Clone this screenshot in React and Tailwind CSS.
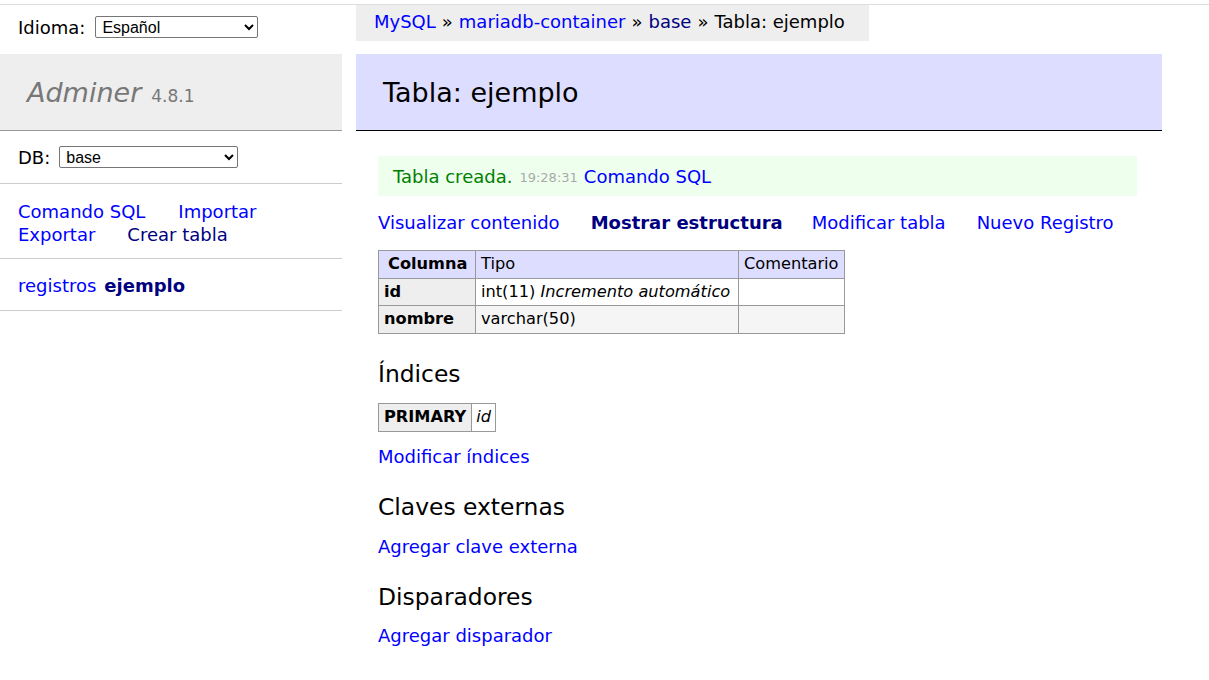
import React from 'react';

const font = { fontFamily: '"DejaVu Sans", Verdana, sans-serif' };
const selectFont = { fontFamily: '"Liberation Sans", Arial, sans-serif' };

function Sidebar() {
  return (
    <div className="w-[342px] shrink-0 text-[18px]">
      <div className="h-[49px] flex items-center pl-[18px] pb-[5px]">
        <span>Idioma:</span>
        <select className="ml-[10px] w-[163px] h-[22px] border border-[#767676] rounded-[2px] text-[16px] px-[2px] bg-white" style={selectFont} defaultValue="es">
          <option value="es">Español</option>
        </select>
      </div>
      <div className="h-[77px] bg-[#eeeeee] border-b border-[#999] flex items-center pl-[27px] pt-[3px]">
        <span className="italic text-[27px] text-[#777]">Adminer</span>
        <span className="ml-[10px] text-[17px] text-[#777] mt-[7px]">4.8.1</span>
      </div>
      <div className="h-[53px] flex items-center pl-[18px] border-b border-[#ccc]">
        <span>DB:</span>
        <select className="ml-[9px] w-[179px] h-[22px] border border-[#767676] rounded-[2px] text-[16px] px-[2px] bg-white" style={selectFont} defaultValue="base">
          <option value="base">base</option>
        </select>
      </div>
      <div className="h-[75px] border-b border-[#ccc] pl-[18px] pt-[16px] leading-[23px]">
        <div>
          <a className="text-[#0000ff]">Comando SQL</a>
          <a className="text-[#0000ff] ml-[33px]">Importar</a>
        </div>
        <div>
          <a className="text-[#0000ff]">Exportar</a>
          <a className="text-[#000080] ml-[32px]">Crear tabla</a>
        </div>
      </div>
      <div className="h-[52px] border-b border-[#ccc] pl-[18px] flex items-center pt-[1px]">
        <a className="text-[#0000ff]">registros</a>
        <a className="text-[#000080] font-bold ml-[8px]">ejemplo</a>
      </div>
    </div>
  );
}

function Main() {
  return (
    <div className="w-[806px] ml-[14px] text-[18px]">
      <div className="h-[36px] bg-[#eeeeee] w-[513px] flex items-center pl-[18px] pb-[3px]">
        <a className="text-[#0000ff]">MySQL</a>
        <span className="mx-[6px]">»</span>
        <a className="text-[#0000ff]">mariadb-container</a>
        <span className="mx-[6px]">»</span>
        <a className="text-[#000080]">base</a>
        <span className="mx-[6px]">»</span>
        <span>Tabla: ejemplo</span>
      </div>
      <h2 className="mt-[13px] h-[77px] bg-[#ddddff] border-b border-black flex items-center pl-[27px] pt-[2px] text-[27px] font-normal">
        Tabla: ejemplo
      </h2>
      <div className="pl-[22px] pr-[25px]">
        <div className="mt-[25px] h-[40px] bg-[#eeffee] flex items-center pl-[15px]">
          <span className="text-[#008000]">Tabla creada.</span>
          <span className="text-[#aaa] text-[13px] ml-[7px] mt-[3px]">19:28:31</span>
          <a className="text-[#0000ff] ml-[6px]">Comando SQL</a>
        </div>
        <div className="mt-[15px] flex h-[23px] items-center">
          <a className="text-[#0000ff]">Visualizar contenido</a>
          <a className="text-[#000080] font-bold ml-[31px]">Mostrar estructura</a>
          <a className="text-[#0000ff] ml-[29px]">Modificar tabla</a>
          <a className="text-[#0000ff] ml-[31px]">Nuevo Registro</a>
        </div>
        <table className="mt-[16px] border-collapse border border-[#999] text-[16.2px] whitespace-nowrap">
          <thead>
            <tr className="bg-[#ddddff] h-[28px]">
              <th className="border border-[#999] pl-[9px] pr-[4px] w-[97px] text-left font-bold">Columna</th>
              <td className="border border-[#999] px-[5px] w-[263px]">Tipo</td>
              <td className="border border-[#999] px-[5px] w-[105px]">Comentario</td>
            </tr>
          </thead>
          <tbody>
            <tr className="h-[27px]">
              <th className="border border-[#999] px-[5px] text-left font-bold bg-[#eeeeee]">id</th>
              <td className="border border-[#999] px-[5px]">int(11) <i>Incremento automático</i></td>
              <td className="border border-[#999] px-[5px]"></td>
            </tr>
            <tr className="h-[28px] bg-[#f5f5f5]">
              <th className="border border-[#999] px-[5px] text-left font-bold bg-[#eeeeee]">nombre</th>
              <td className="border border-[#999] px-[5px]">varchar(50)</td>
              <td className="border border-[#999] px-[5px]"></td>
            </tr>
          </tbody>
        </table>
        <h3 className="mt-[24px] text-[23.4px] font-normal leading-[32px]">Índices</h3>
        <table className="mt-[13px] border-collapse border border-[#999] text-[16.2px]">
          <tbody>
            <tr className="h-[28px]">
              <th className="border border-[#999] px-[5px] text-left font-bold bg-[#eeeeee]">PRIMARY</th>
              <td className="border border-[#999] px-[4px]"><i>id</i></td>
            </tr>
          </tbody>
        </table>
        <p className="mt-[13px] leading-[23px]"><a className="text-[#0000ff]">Modificar índices</a></p>
        <h3 className="mt-[23px] text-[23.4px] font-normal leading-[32px]">Claves externas</h3>
        <p className="mt-[12px] leading-[23px]"><a className="text-[#0000ff]">Agregar clave externa</a></p>
        <h3 className="mt-[23px] text-[23.4px] font-normal leading-[32px]">Disparadores</h3>
        <p className="mt-[11px] leading-[23px]"><a className="text-[#0000ff]">Agregar disparador</a></p>
      </div>
    </div>
  );
}

export default function App() {
  return (
    <div className="w-[1209px] h-[680px] bg-white text-black overflow-hidden" style={font}>
      <div className="h-[4px] bg-white" />
      <div className="h-[1px] bg-[#dddddd]" />
      <div className="flex">
        <Sidebar />
        <Main />
      </div>
    </div>
  );
}
